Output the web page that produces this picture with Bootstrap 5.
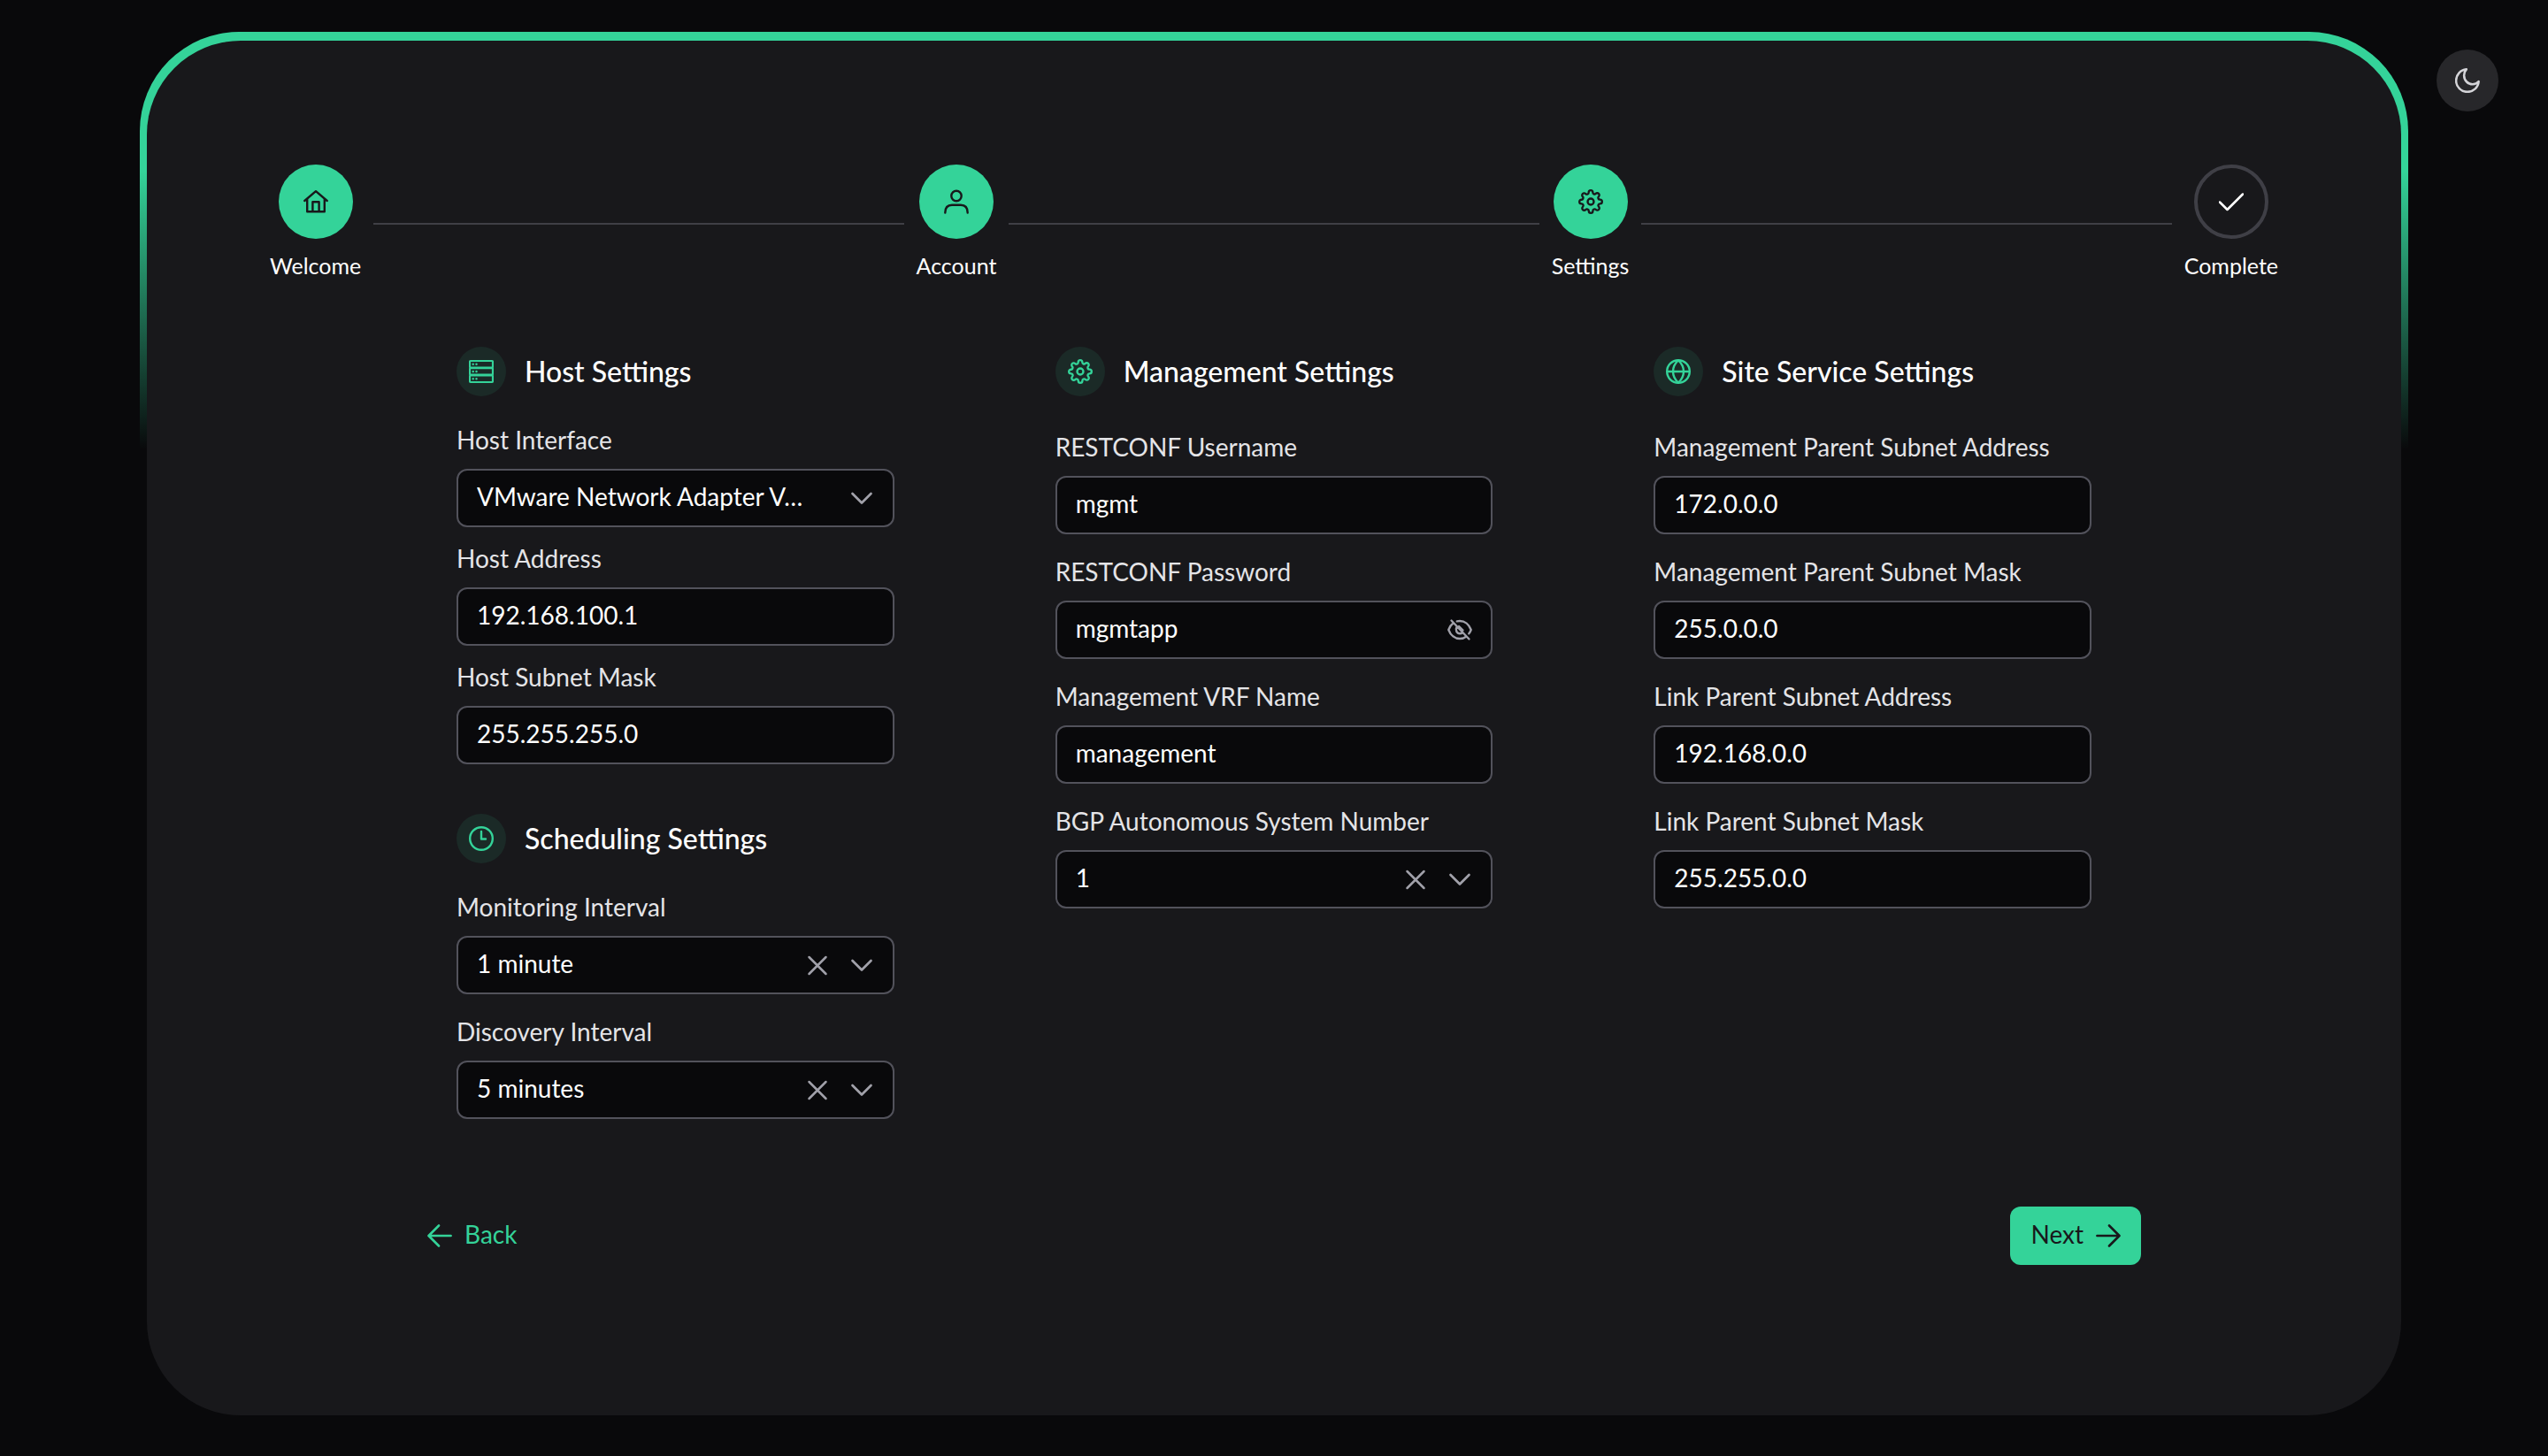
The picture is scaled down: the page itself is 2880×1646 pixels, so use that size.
<!DOCTYPE html>
<html lang="en" data-bs-theme="dark">
<head>
<meta charset="utf-8">
<meta name="viewport" content="width=device-width, initial-scale=1">
<title>Setup – Settings</title>
<link href="https://cdn.jsdelivr.net/npm/bootstrap@5.3.0/dist/css/bootstrap.min.css" rel="stylesheet">
<style>
  :root { --accent: #34d399; --ground: #09090b; --panel: #18181b; --line: #3f3f46; --edge: #52525b; --muted-icon: #a1a1aa; }
  body { background: var(--ground); color: #fff; font-family: Lato, "Liberation Sans", sans-serif; font-size: 28px; line-height: 34px; }
  .page-wrap { padding: 36px 158px; min-height: 100vh; }
  .glow-frame { padding: 10px 8px; border-radius: 112px; background: linear-gradient(180deg, var(--accent) 10%, transparent 30%); }
  .panel { background: var(--panel); border-radius: 106px; padding: 140px 140px 170px; }
  svg { width: 28px; height: 28px; fill: none; stroke: currentColor; stroke-linecap: round; stroke-linejoin: round; flex: none; display: block; }

  .theme-toggle { position: fixed; top: 56px; right: 56px; width: 70px; height: 70px; background: #27272a; color: #d4d4d8; border: 0; }

  .stepper { gap: 14px; margin: 0 -1px 72px; }
  .step-label { font-size: 25px; line-height: 36px; padding: 12px 0 2px; }
  .step-dot { width: 84px; height: 84px; background: var(--accent); color: var(--panel); }
  .step-dot.pending { background: transparent; color: #fff; border: 4px solid var(--line); }
  .step-line { height: 2px; background: var(--line); }

  .wizard { max-width: 1960px; }
  .sections { padding: 0 56px; margin-bottom: 99px; }
  .sections > .row { --bs-gutter-x: 182px; }
  .section-head { gap: 21px; margin-bottom: 40px; }
  .section-head.snug { margin-bottom: 32px; }
  .section-head h2 { font-size: 32px; line-height: 40px; font-weight: 500; margin: 0; }
  .section-icon { width: 56px; height: 56px; background: #1b2a27; color: var(--accent); }
  .host-group { margin-bottom: 56px; }
  .fields { gap: 25px; }
  .fields.snug { gap: 18px; }
  .fields label { color: #e4e4e7; margin-bottom: 16px; display: block; }
  .form-control, .form-select { height: 66px; padding: 12px 21px 16px; border: 2px solid var(--edge); border-radius: 12px; background: var(--ground); color: #fff; font-size: 28px; line-height: 34px; }
  .form-select { background-image: none; padding-right: 60px; }
  .field-icons { position: absolute; top: 0; bottom: 0; right: 23px; gap: 22px; color: var(--muted-icon); pointer-events: none; }
  .field-icons button { pointer-events: auto; color: inherit; }

  .wizard-nav .btn { height: 66px; padding: 0 23px; gap: 14px; border: 0; border-radius: 12px; font-size: 28px; line-height: 34px; }
  .btn-next { background: var(--accent); color: var(--panel); }
  .btn-back { color: var(--accent); }
  .btn-next:hover { background: #6ee7b7; color: var(--panel); }
  .btn-back:hover { color: #6ee7b7; }
  .wizard-nav span { padding-bottom: 4px; }
</style>
</head>
<body>
<svg class="d-none" aria-hidden="true">
  <symbol id="i-cog" viewBox="0 0 24 24"><circle cx="12" cy="12" r="3"/><path d="M19.4 15a1.65 1.65 0 0 0 .33 1.82l.06.06a2 2 0 0 1 0 2.83 2 2 0 0 1-2.83 0l-.06-.06a1.65 1.65 0 0 0-1.82-.33 1.65 1.65 0 0 0-1 1.51V21a2 2 0 0 1-2 2 2 2 0 0 1-2-2v-.09A1.65 1.65 0 0 0 9 19.4a1.65 1.65 0 0 0-1.82.33l-.06.06a2 2 0 0 1-2.83 0 2 2 0 0 1 0-2.83l.06-.06a1.65 1.65 0 0 0 .33-1.82 1.65 1.65 0 0 0-1.51-1H3a2 2 0 0 1-2-2 2 2 0 0 1 2-2h.09A1.65 1.65 0 0 0 4.6 9a1.65 1.65 0 0 0-.33-1.82l-.06-.06a2 2 0 0 1 0-2.83 2 2 0 0 1 2.83 0l.06.06a1.65 1.65 0 0 0 1.82.33H9a1.65 1.65 0 0 0 1-1.51V3a2 2 0 0 1 2-2 2 2 0 0 1 2 2v.09a1.65 1.65 0 0 0 1 1.51 1.65 1.65 0 0 0 1.82-.33l.06-.06a2 2 0 0 1 2.83 0 2 2 0 0 1 0 2.83l-.06.06a1.65 1.65 0 0 0-.33 1.82V9a1.65 1.65 0 0 0 1.51 1H21a2 2 0 0 1 2 2 2 2 0 0 1-2 2h-.09a1.65 1.65 0 0 0-1.51 1z"/></symbol>
  <symbol id="i-chevron" viewBox="0 0 28 28"><path d="M3.5 9L14 19.5L24.5 9"/></symbol>
  <symbol id="i-times" viewBox="0 0 28 28"><path d="M4.5 5L23.5 24M23.5 5L4.5 24"/></symbol>
</svg>

<button type="button" class="theme-toggle rounded-circle d-flex align-items-center justify-content-center p-0" aria-label="Toggle theme">
  <svg viewBox="1.5 1.5 21 21" stroke-width="1.9"><path d="M21.5 12.9A9.6 9.6 0 1 1 11.1 2.5 7 7.3 0 0 0 21.5 12.9z"/></svg>
</button>

<main class="page-wrap">
  <div class="glow-frame">
    <div class="panel">
      <nav class="stepper d-flex align-items-center" aria-label="Setup steps">
        <div class="d-flex flex-column align-items-center">
          <div class="step-dot rounded-circle d-flex align-items-center justify-content-center">
            <svg viewBox="0 0 28 28" stroke-width="2.4"><path d="M1.3 13L14 2.2L26.7 13M4.2 11V25.2H23.8V11M10.4 25V14.2H17.6V25"/></svg>
          </div>
          <div class="step-label">Welcome</div>
        </div>
        <div class="step-line flex-fill"></div>
        <div class="d-flex flex-column align-items-center">
          <div class="step-dot rounded-circle d-flex align-items-center justify-content-center">
            <svg viewBox="0 0 28 28" stroke-width="2.4"><circle cx="14" cy="7.5" r="5.7"/><path d="M1.3 26.5c0-6 3-8.8 7.7-8.8h10c4.7 0 7.7 2.8 7.7 8.8"/></svg>
          </div>
          <div class="step-label">Account</div>
        </div>
        <div class="step-line flex-fill"></div>
        <div class="d-flex flex-column align-items-center">
          <div class="step-dot rounded-circle d-flex align-items-center justify-content-center">
            <svg stroke-width="2"><use href="#i-cog"/></svg>
          </div>
          <div class="step-label">Settings</div>
        </div>
        <div class="step-line flex-fill"></div>
        <div class="d-flex flex-column align-items-center">
          <div class="step-dot pending rounded-circle d-flex align-items-center justify-content-center">
            <svg viewBox="0 0 28 28" stroke-width="2.5"><path d="M1 14.5L9.5 23L27 5.5"/></svg>
          </div>
          <div class="step-label">Complete</div>
        </div>
      </nav>

      <form class="wizard mx-auto">
        <div class="sections">
          <div class="row row-cols-3">
            <div class="col">
              <section class="host-group">
                <div class="section-head snug d-flex align-items-center">
                  <span class="section-icon rounded-circle d-flex align-items-center justify-content-center">
                    <svg viewBox="0 0 28 28" stroke-width="2.2"><rect x="1" y="2" width="26" height="7.5" rx="1"/><rect x="1" y="10.2" width="26" height="7.5" rx="1"/><rect x="1" y="18.5" width="26" height="7.5" rx="1"/><path stroke-width="2.5" d="M4.7 5.8h0M8.5 5.8h0M4.7 14h0M8.5 14h0M4.7 22.2h0M8.5 22.2h0"/></svg>
                  </span>
                  <h2>Host Settings</h2>
                </div>
                <div class="fields snug d-flex flex-column">
                  <div>
                    <label for="host-if">Host Interface</label>
                    <div class="position-relative">
                      <select id="host-if" class="form-select"><option>VMware Network Adapter V…</option></select>
                      <span class="field-icons d-flex align-items-center"><svg stroke-width="2.7"><use href="#i-chevron"/></svg></span>
                    </div>
                  </div>
                  <div>
                    <label for="host-addr">Host Address</label>
                    <input id="host-addr" type="text" class="form-control" value="192.168.100.1">
                  </div>
                  <div>
                    <label for="host-mask">Host Subnet Mask</label>
                    <input id="host-mask" type="text" class="form-control" value="255.255.255.0">
                  </div>
                </div>
              </section>
              <section>
                <div class="section-head snug d-flex align-items-center">
                  <span class="section-icon rounded-circle d-flex align-items-center justify-content-center">
                    <svg viewBox="0 0 28 28" stroke-width="2.4"><circle cx="14" cy="14" r="12.8"/><path d="M14 6V14.5H19"/></svg>
                  </span>
                  <h2>Scheduling Settings</h2>
                </div>
                <div class="fields d-flex flex-column">
                  <div>
                    <label for="mon-int">Monitoring Interval</label>
                    <div class="position-relative">
                      <select id="mon-int" class="form-select"><option>1 minute</option></select>
                      <span class="field-icons d-flex align-items-center">
                        <button type="button" class="btn p-0 border-0" aria-label="Clear monitoring interval"><svg stroke-width="2.5"><use href="#i-times"/></svg></button>
                        <svg stroke-width="2.7"><use href="#i-chevron"/></svg>
                      </span>
                    </div>
                  </div>
                  <div>
                    <label for="disc-int">Discovery Interval</label>
                    <div class="position-relative">
                      <select id="disc-int" class="form-select"><option>5 minutes</option></select>
                      <span class="field-icons d-flex align-items-center">
                        <button type="button" class="btn p-0 border-0" aria-label="Clear discovery interval"><svg stroke-width="2.5"><use href="#i-times"/></svg></button>
                        <svg stroke-width="2.7"><use href="#i-chevron"/></svg>
                      </span>
                    </div>
                  </div>
                </div>
              </section>
            </div>

            <section class="col">
              <div class="section-head d-flex align-items-center">
                <span class="section-icon rounded-circle d-flex align-items-center justify-content-center">
                  <svg stroke-width="2"><use href="#i-cog"/></svg>
                </span>
                <h2>Management Settings</h2>
              </div>
              <div class="fields d-flex flex-column">
                <div>
                  <label for="rc-user">RESTCONF Username</label>
                  <input id="rc-user" type="text" class="form-control" value="mgmt">
                </div>
                <div>
                  <label for="rc-pass">RESTCONF Password</label>
                  <div class="position-relative">
                    <input id="rc-pass" type="text" class="form-control" value="mgmtapp">
                    <span class="field-icons d-flex align-items-center">
                      <button type="button" class="btn p-0 border-0" aria-label="Hide password">
                        <svg viewBox="0 0 28 28" stroke-width="2.4"><path d="M4.5 3.5L24.5 24.5M10.8 4.4C12 4.1 13 4 14 4C19.5 4 24.5 8 26.7 14C26.1 15.7 25.3 17.1 24.3 18.3M6.5 6.5C4 8.3 2.3 11 1.3 14C3.5 20 8.5 24 14 24C16.8 24 19.4 23.2 21.5 21.5M10.5 10.8C8.5 14.5 10.8 18.2 14 18.2C15.2 18.2 16.3 17.8 17.2 17M13 10L17.5 14.5"/></svg>
                      </button>
                    </span>
                  </div>
                </div>
                <div>
                  <label for="vrf">Management VRF Name</label>
                  <input id="vrf" type="text" class="form-control" value="management">
                </div>
                <div>
                  <label for="bgp">BGP Autonomous System Number</label>
                  <div class="position-relative">
                    <select id="bgp" class="form-select"><option>1</option></select>
                    <span class="field-icons d-flex align-items-center">
                      <button type="button" class="btn p-0 border-0" aria-label="Clear system number"><svg stroke-width="2.5"><use href="#i-times"/></svg></button>
                      <svg stroke-width="2.7"><use href="#i-chevron"/></svg>
                    </span>
                  </div>
                </div>
              </div>
            </section>

            <section class="col">
              <div class="section-head d-flex align-items-center">
                <span class="section-icon rounded-circle d-flex align-items-center justify-content-center">
                  <svg viewBox="0 0 28 28" stroke-width="2.4"><circle cx="14" cy="14" r="12.8"/><path d="M1.5 14H26.5M14 1.2C6 9 6 19 14 26.8C22 19 22 9 14 1.2"/></svg>
                </span>
                <h2>Site Service Settings</h2>
              </div>
              <div class="fields d-flex flex-column">
                <div>
                  <label for="mp-addr">Management Parent Subnet Address</label>
                  <input id="mp-addr" type="text" class="form-control" value="172.0.0.0">
                </div>
                <div>
                  <label for="mp-mask">Management Parent Subnet Mask</label>
                  <input id="mp-mask" type="text" class="form-control" value="255.0.0.0">
                </div>
                <div>
                  <label for="lp-addr">Link Parent Subnet Address</label>
                  <input id="lp-addr" type="text" class="form-control" value="192.168.0.0">
                </div>
                <div>
                  <label for="lp-mask">Link Parent Subnet Mask</label>
                  <input id="lp-mask" type="text" class="form-control" value="255.255.0.0">
                </div>
              </div>
            </section>
          </div>
        </div>

        <div class="wizard-nav d-flex justify-content-between">
          <button type="button" class="btn btn-back d-flex align-items-center">
            <svg viewBox="0 0 28 28" stroke-width="2.6"><path d="M26.6 14H1.6M13 2.5L1.5 14L13 25.5"/></svg>
            <span>Back</span>
          </button>
          <button type="submit" class="btn btn-next d-flex align-items-center">
            <span>Next</span>
            <svg viewBox="0 0 28 28" stroke-width="2.6"><path d="M1.4 14H26.4M15 2.5L26.5 14L15 25.5"/></svg>
          </button>
        </div>
      </form>
    </div>
  </div>
</main>
<script src="https://cdn.jsdelivr.net/npm/bootstrap@5.3.0/dist/js/bootstrap.bundle.min.js"></script>
</body>
</html>
